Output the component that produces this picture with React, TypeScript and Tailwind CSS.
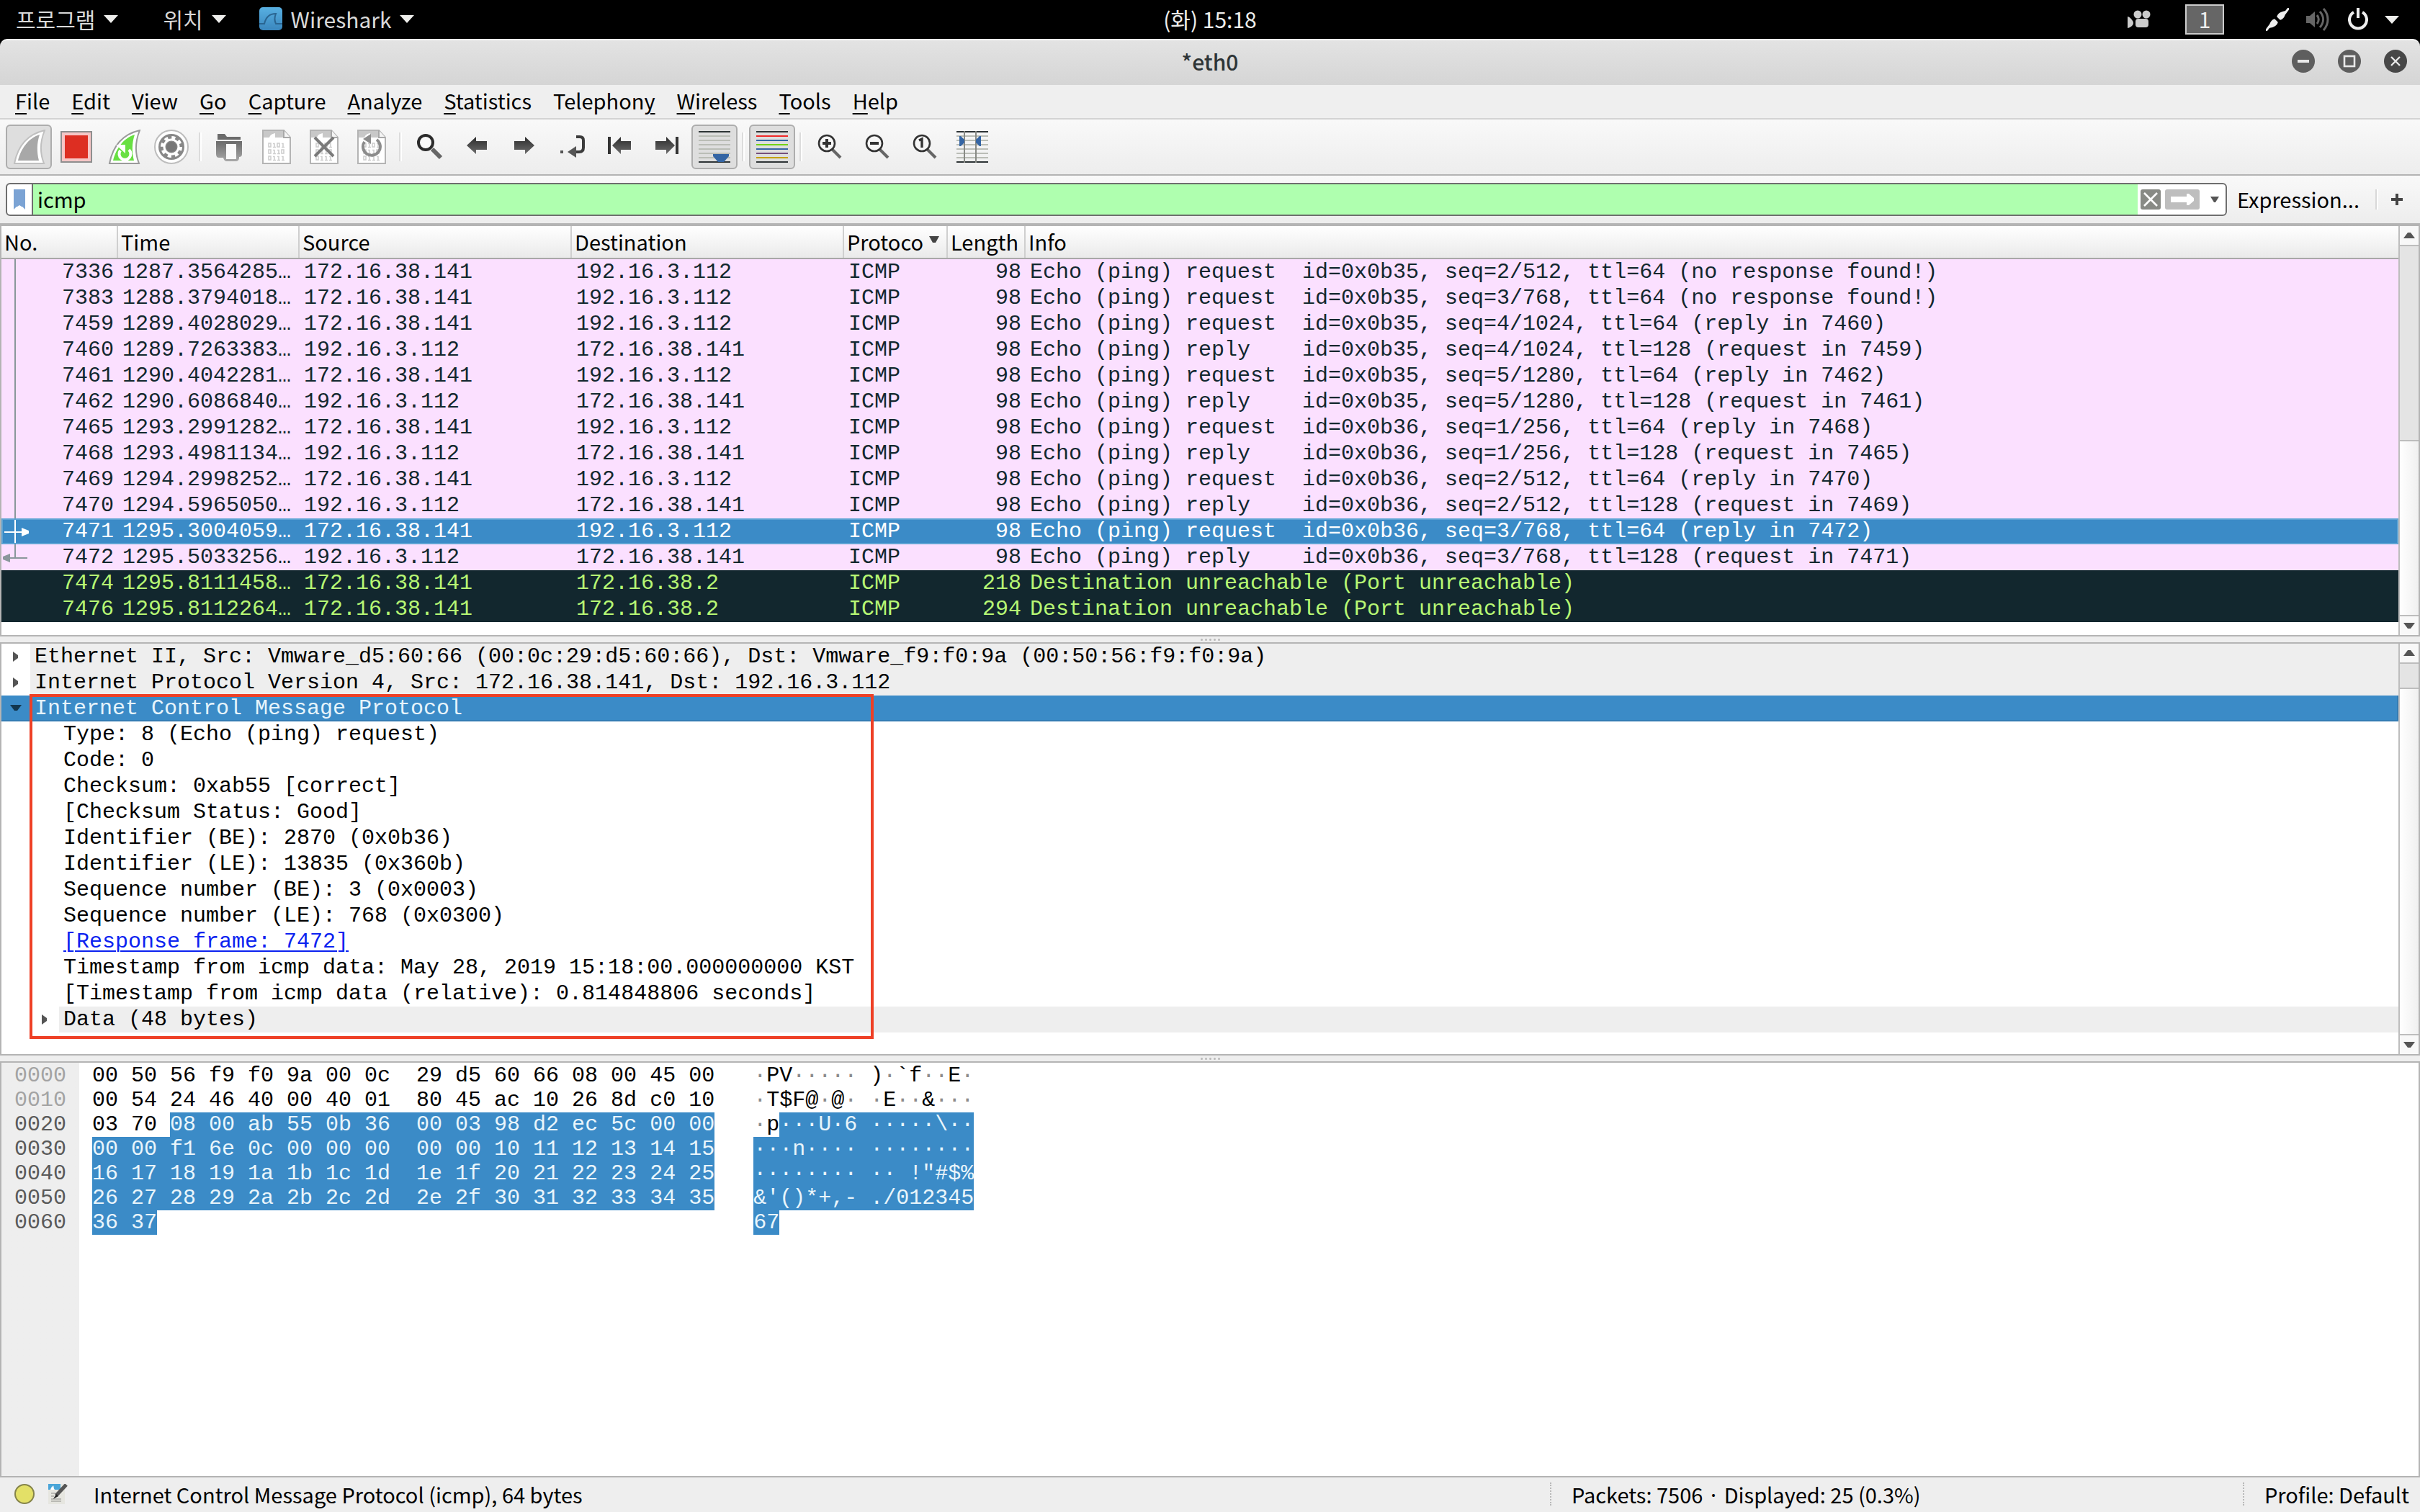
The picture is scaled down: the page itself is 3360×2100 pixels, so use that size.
import React, { Fragment, ReactNode } from "react";

/* ---------- data ---------- */

type Kind = "ping" | "selected" | "error";
type Mark = "line" | "request" | "reply" | "none";
type Packet = { no: string; time: string; src: string; dst: string; len: string; info: string; kind: Kind; mark: Mark };

const A = "172.16.38.141";
const B = "192.16.3.112";

const packets: Packet[] = [
  { no: "7336", time: "1287.3564285…", src: A, dst: B, len: "98", info: "Echo (ping) request  id=0x0b35, seq=2/512, ttl=64 (no response found!)", kind: "ping", mark: "line" },
  { no: "7383", time: "1288.3794018…", src: A, dst: B, len: "98", info: "Echo (ping) request  id=0x0b35, seq=3/768, ttl=64 (no response found!)", kind: "ping", mark: "line" },
  { no: "7459", time: "1289.4028029…", src: A, dst: B, len: "98", info: "Echo (ping) request  id=0x0b35, seq=4/1024, ttl=64 (reply in 7460)", kind: "ping", mark: "line" },
  { no: "7460", time: "1289.7263383…", src: B, dst: A, len: "98", info: "Echo (ping) reply    id=0x0b35, seq=4/1024, ttl=128 (request in 7459)", kind: "ping", mark: "line" },
  { no: "7461", time: "1290.4042281…", src: A, dst: B, len: "98", info: "Echo (ping) request  id=0x0b35, seq=5/1280, ttl=64 (reply in 7462)", kind: "ping", mark: "line" },
  { no: "7462", time: "1290.6086840…", src: B, dst: A, len: "98", info: "Echo (ping) reply    id=0x0b35, seq=5/1280, ttl=128 (request in 7461)", kind: "ping", mark: "line" },
  { no: "7465", time: "1293.2991282…", src: A, dst: B, len: "98", info: "Echo (ping) request  id=0x0b36, seq=1/256, ttl=64 (reply in 7468)", kind: "ping", mark: "line" },
  { no: "7468", time: "1293.4981134…", src: B, dst: A, len: "98", info: "Echo (ping) reply    id=0x0b36, seq=1/256, ttl=128 (request in 7465)", kind: "ping", mark: "line" },
  { no: "7469", time: "1294.2998252…", src: A, dst: B, len: "98", info: "Echo (ping) request  id=0x0b36, seq=2/512, ttl=64 (reply in 7470)", kind: "ping", mark: "line" },
  { no: "7470", time: "1294.5965050…", src: B, dst: A, len: "98", info: "Echo (ping) reply    id=0x0b36, seq=2/512, ttl=128 (request in 7469)", kind: "ping", mark: "line" },
  { no: "7471", time: "1295.3004059…", src: A, dst: B, len: "98", info: "Echo (ping) request  id=0x0b36, seq=3/768, ttl=64 (reply in 7472)", kind: "selected", mark: "request" },
  { no: "7472", time: "1295.5033256…", src: B, dst: A, len: "98", info: "Echo (ping) reply    id=0x0b36, seq=3/768, ttl=128 (request in 7471)", kind: "ping", mark: "reply" },
  { no: "7474", time: "1295.8111458…", src: A, dst: "172.16.38.2", len: "218", info: "Destination unreachable (Port unreachable)", kind: "error", mark: "none" },
  { no: "7476", time: "1295.8112264…", src: A, dst: "172.16.38.2", len: "294", info: "Destination unreachable (Port unreachable)", kind: "error", mark: "none" },
];

const icmpFields = [
  "Type: 8 (Echo (ping) request)",
  "Code: 0",
  "Checksum: 0xab55 [correct]",
  "[Checksum Status: Good]",
  "Identifier (BE): 2870 (0x0b36)",
  "Identifier (LE): 13835 (0x360b)",
  "Sequence number (BE): 3 (0x0003)",
  "Sequence number (LE): 768 (0x0300)",
  "[Response frame: 7472]",
  "Timestamp from icmp data: May 28, 2019 15:18:00.000000000 KST",
  "[Timestamp from icmp data (relative): 0.814848806 seconds]",
];

/* bytes before the highlighted range come first, highlighted ones second */
const dump = [
  { off: "0000", hex: ["00 50 56 f9 f0 9a 00 0c  29 d5 60 66 08 00 45 00", ""], gap: 3, asc: ["·PV····· )·`f··E·", ""] },
  { off: "0010", hex: ["00 54 24 46 40 00 40 01  80 45 ac 10 26 8d c0 10", ""], gap: 3, asc: ["·T$F@·@· ·E··&···", ""] },
  { off: "0020", hex: ["03 70 ", "08 00 ab 55 0b 36  00 03 98 d2 ec 5c 00 00"], gap: 3, asc: ["·p", "···U·6 ·····\\··"] },
  { off: "0030", hex: ["", "00 00 f1 6e 0c 00 00 00  00 00 10 11 12 13 14 15"], gap: 3, asc: ["", "···n···· ········"] },
  { off: "0040", hex: ["", "16 17 18 19 1a 1b 1c 1d  1e 1f 20 21 22 23 24 25"], gap: 3, asc: ["", "········ ·· !\"#$%"] },
  { off: "0050", hex: ["", "26 27 28 29 2a 2b 2c 2d  2e 2f 30 31 32 33 34 35"], gap: 3, asc: ["", "&'()*+,- ./012345"] },
  { off: "0060", hex: ["", "36 37"], gap: 46, asc: ["", "67"] },
];

/* ---------- top panel ---------- */

function Caret({ className = "text-[#eeeeec]" }: { className?: string }) {
  return (
    <svg viewBox="0 0 20 12" className={`h-3 w-5 ${className}`} aria-hidden="true">
      <path d="M0 1h20L10 12z" fill="currentColor" />
    </svg>
  );
}

function TopPanel() {
  return (
    <header className="grid h-[54px] shrink-0 grid-cols-[1fr_auto_1fr] items-center bg-black text-[30px] leading-[50px] text-[#d9d9d9]">
      <nav className="flex items-center pb-0.5 pl-[22px]">
        <button className="flex items-center gap-3">
          프로그램 <Caret />
        </button>
        <button className="ml-[62px] flex items-center gap-3">
          위치 <Caret />
        </button>
        <button className="ml-[46px] flex items-center gap-3">
          <svg viewBox="0 0 32 32" className="size-8" aria-hidden="true">
            <defs>
              <linearGradient id="ws" x1="0" y1="0" x2="0" y2="1">
                <stop offset="0" stopColor="#58b0e2" />
                <stop offset="1" stopColor="#3a86bd" />
              </linearGradient>
            </defs>
            <rect width="32" height="32" rx="5" fill="url(#ws)" />
            <path d="M0 23h7C9 14 14 9 23 9c-2 5-2 10 0 14h9" fill="none" stroke="#2a6591" strokeWidth="2" />
          </svg>
          Wireshark <Caret />
        </button>
      </nav>
      <time className="pb-0.5 text-[#eeeeec]">(화) 15:18</time>
      <div className="flex items-center justify-end pr-[29px]">
        <svg viewBox="0 0 32 26" className="mr-12 h-[26px] w-8" fill="#ccc" aria-hidden="true">
          <circle cx="14" cy="6" r="5.5" />
          <circle cx="26" cy="6" r="5.5" />
          <rect x="11" y="12" width="18" height="12" rx="4" />
          <path d="M0 9c2 0 8 5 8 9s-6 7-8 7z" />
        </svg>
        <button className="mr-[58px] flex h-[42px] w-[54px] items-center justify-center border-2 border-[#ccc] bg-[#666] pb-0.5 leading-none text-[#eee]">1</button>
        <svg viewBox="0 0 32 32" className="mr-6 size-8" aria-hidden="true">
          <path d="M0 32l6-8M26 8l6-8" stroke="#eee" strokeWidth="3" />
          <path d="M4 28c1-8 4-12 9-13l4 4c-1 5-5 8-13 9zM28 4c-8 1-12 4-13 9l4 4c5-1 8-5 9-13z" fill="#eee" />
          <path d="M12 14l6 6M14 12l6 6" stroke="#000" strokeWidth="1.5" />
        </svg>
        <svg viewBox="0 0 32 32" className="mr-[26px] size-8" fill="none" stroke="#666" strokeWidth="3" aria-hidden="true">
          <path d="M0 11h5l7-6v22l-7-6H0z" fill="#666" stroke="none" />
          <path d="M15 10c3 4 3 8 0 12M19 5c6 7 6 15 0 22M24 1c8 9 8 21 0 30" />
        </svg>
        <svg viewBox="0 0 28 32" className="mr-[23px] h-8 w-7" fill="none" stroke="#eee" strokeWidth="4" aria-hidden="true">
          <path d="M8 6a12 12 0 1 0 12 0M14 0v14" />
        </svg>
        <Caret />
      </div>
    </header>
  );
}

/* ---------- title and menu ---------- */

function TitleBar() {
  return (
    <div className="shrink-0 bg-black">
      <div className="grid h-16 grid-cols-[1fr_auto_1fr] items-center rounded-t-[10px] border-t-2 border-[#fafafa] bg-linear-to-b from-[#e3e3e3] to-[#d5d5d5] pr-[18px] pb-1">
        <span />
        <h1 className="pl-[18px] text-[30px] leading-none font-medium text-[#2e3436]">*eth0</h1>
        <div className="flex justify-end gap-8">
          <button aria-label="Minimize">
            <svg viewBox="0 0 32 32" className="size-8"><circle cx="16" cy="16" r="16" fill="#5e5e5e" /><path d="M8 16h16" stroke="#e8e8e8" strokeWidth="4" /></svg>
          </button>
          <button aria-label="Maximize">
            <svg viewBox="0 0 32 32" className="size-8"><circle cx="16" cy="16" r="16" fill="#5e5e5e" /><rect x="9" y="9" width="14" height="14" fill="none" stroke="#e8e8e8" strokeWidth="2.6" /></svg>
          </button>
          <button aria-label="Close">
            <svg viewBox="0 0 32 32" className="size-8"><circle cx="16" cy="16" r="16" fill="#474747" /><path d="M10 10l12 12M22 10L10 22" stroke="#e8e8e8" strokeWidth="2.4" /></svg>
          </button>
        </div>
      </div>
    </div>
  );
}

const menus: [string, string, string][] = [
  ["", "F", "ile"], ["", "E", "dit"], ["", "V", "iew"], ["", "G", "o"], ["", "C", "apture"], ["", "A", "nalyze"],
  ["", "S", "tatistics"], ["Telephon", "y", ""], ["", "W", "ireless"], ["", "T", "ools"], ["", "H", "elp"],
];

function MenuBar() {
  return (
    <nav className="flex h-12 shrink-0 items-start gap-[30px] border-b-2 border-[#d3d3d3] bg-[#efefef] pl-[21px]">
      {menus.map(([a, b, c]) => (
        <button key={a + b + c} className="leading-[42px]">
          {a}
          <span className="underline decoration-2 underline-offset-[5px]">{b}</span>
          {c}
        </button>
      ))}
    </nav>
  );
}

/* ---------- toolbar ---------- */

function Icon({ children }: { children: ReactNode }) {
  return (
    <svg viewBox="0 0 48 48" className="size-12" fill="none" aria-hidden="true">
      {children}
    </svg>
  );
}

const FIN = "M4 47C8 26 20 7 46 1C40 16 39 32 45 47z";
const FIN_IN = "M9 43C13 27 23 12 39 7C35 19 35 31 38 43z";

function Fin({ fill }: { fill: string }) {
  return (
    <>
      <path d={FIN} fill="#fff" stroke={fill === "#a8a8a8" ? "#c0c0c0" : "#9a9a9a"} strokeWidth="2" />
      <path d={FIN_IN} fill={fill} />
    </>
  );
}

function Doc({ children }: { children?: ReactNode }) {
  const bits = ["0101", "0110", "0111"];
  return (
    <Icon>
      <path d="M5 1h29l9 10v36H5z" fill="#fff" stroke="#b4b4b4" strokeWidth="2" />
      <path d="M6 2h27v9H22V5c-5 1-7 3-8 6H6z" fill="#c8c8c8" />
      <path d="M34 1v10h9" stroke="#a8a8a8" strokeWidth="2" fill="#f4f4f4" />
      {bits.map((row, r) =>
        row.split("").map((b, i) =>
          b === "0" ? (
            <rect key={`${r}${i}`} x={13 + i * 6} y={19 + r * 9} width="3" height="5" stroke="#cfcfcf" strokeWidth="1.6" />
          ) : (
            <path key={`${r}${i}`} d={`M${13 + i * 6} ${19.5 + r * 9}h2v5m-2 0h4`} stroke="#cfcfcf" strokeWidth="1.6" />
          ),
        ),
      )}
      {children}
    </Icon>
  );
}

function Lens({ children }: { children?: ReactNode }) {
  return (
    <Icon>
      <path d="M27 27l12 12" stroke="#666" strokeWidth="4" />
      <circle cx="20" cy="19" r="11" fill="#f6f6f6" stroke="#333" strokeWidth="2.6" />
      {children}
    </Icon>
  );
}

function Gradients() {
  return (
    <svg className="absolute size-0" aria-hidden="true">
      <defs>
        <linearGradient id="dark" x1="0" y1="0" x2="0" y2="1">
          <stop offset="0" stopColor="#2b2b2b" />
          <stop offset="1" stopColor="#6e6e6e" />
        </linearGradient>
        <linearGradient id="folder" x1="0" y1="0" x2="0" y2="1">
          <stop offset="0" stopColor="#6b6b6b" />
          <stop offset="1" stopColor="#a8a8a8" />
        </linearGradient>
      </defs>
    </svg>
  );
}

function Lines({ colors }: { colors: string[] }) {
  return (
    <>
      <path d="M2 3h44M2 45h44" stroke="#2e3436" strokeWidth="2" />
      {colors.map((c, i) => (
        <path key={i} d={`M2 ${9 + i * 6}h44`} stroke={c} strokeWidth="2" />
      ))}
    </>
  );
}

const pale = Array(6).fill("#babdb6");

const tools: ({ label: string; pressed?: boolean; icon: ReactNode } | null)[] = [
  { label: "Start capture", pressed: true, icon: <Icon><Fin fill="#a8a8a8" /></Icon> },
  { label: "Stop capture", icon: <Icon><rect x="3" y="3" width="42" height="42" fill="#f6c6c6" stroke="#8f8f8f" strokeWidth="2" /><rect x="8" y="8" width="32" height="32" fill="#dd2e22" /></Icon> },
  { label: "Restart capture", icon: <Icon><Fin fill="#68e042" /><path d="M19 29a8 8 0 1 0 12-1" stroke="#fff" strokeWidth="4" /><path d="M13 21h13v12z" fill="#fff" /></Icon> },
  {
    label: "Capture options",
    icon: (
      <Icon>
        <circle cx="24" cy="24" r="23" fill="#fff" stroke="#bdbdbd" strokeWidth="2" />
        <circle cx="24" cy="24" r="18" fill="#888" />
        <circle cx="24" cy="24" r="10" stroke="#fff" strokeWidth="3" />
        <circle cx="24" cy="24" r="13" stroke="#fff" strokeWidth="4" strokeDasharray="5.1 5.1" />
        <circle cx="24" cy="24" r="7" fill="#777" />
      </Icon>
    ),
  },
  null,
  {
    label: "Open file",
    icon: (
      <Icon>
        <path d="M8 6h10l3 4h19v4H8z" fill="#6b6b6b" />
        <path d="M6 16h36v18q0 4-4 4v1q0 5-5 5H21q-4 0-5-5h-6q-4 0-4-5z" fill="url(#folder)" />
        <rect x="20" y="20" width="14" height="21" fill="#fafafa" />
      </Icon>
    ),
  },
  { label: "Save file", icon: <Doc /> },
  { label: "Close file", icon: <Doc><path d="M11 11l26 26M37 11L11 37" stroke="#7a7a7a" strokeWidth="4" /></Doc> },
  { label: "Reload file", icon: <Doc><path d="M14 17a12 12 0 1 0 17-3" stroke="#8c8c8c" strokeWidth="4" /><path d="M23 6v14l-11-7z" fill="#8c8c8c" /></Doc> },
  null,
  { label: "Find packet", icon: <Icon><path d="M28 27l12 12" stroke="#666" strokeWidth="6" /><circle cx="19" cy="18" r="10" fill="#fafafa" stroke="#2b2b2b" strokeWidth="4" /></Icon> },
  { label: "Previous packet", icon: <Icon><path d="M10 22L23 10v6h15v12H23v6z" fill="url(#dark)" /></Icon> },
  { label: "Next packet", icon: <Icon><path d="M38 22L25 10v6H10v12h15v6z" fill="url(#dark)" /></Icon> },
  { label: "Go to packet", icon: <Icon><path d="M30 10h5q5 0 5 5v10q0 6-6 6h-6" stroke="#3c3c3c" strokeWidth="4" /><path d="M18 31l12-8v16z" fill="#555" /><rect x="8" y="29" width="4" height="4" fill="#555" /></Icon> },
  { label: "First packet", icon: <Icon><path d="M10 10v24" stroke="#333" strokeWidth="4" /><path d="M14 22L26 10v6h14v12H26v6z" fill="url(#dark)" /></Icon> },
  { label: "Last packet", icon: <Icon><path d="M38 10v24" stroke="#333" strokeWidth="4" /><path d="M35 22L23 10v6H8v12h15v6z" fill="url(#dark)" /></Icon> },
  { label: "Auto scroll", pressed: true, icon: <Icon><Lines colors={pale} /><path d="M22 34h22v3l-7 8h-8l-7-8z" fill="#3465a4" /></Icon> },
  null,
  { label: "Colorize", pressed: true, icon: <Icon><Lines colors={["#ef2929", "#3465a4", "#73d216", "#3465a4", "#75507b", "#c4a000"]} /></Icon> },
  null,
  { label: "Zoom in", icon: <Lens><path d="M14 19h12M20 13v12" stroke="#333" strokeWidth="4" /></Lens> },
  { label: "Zoom out", icon: <Lens><path d="M14 19h12" stroke="#333" strokeWidth="4" /></Lens> },
  { label: "Normal size", icon: <Lens><path d="M16 15l4-2v12" stroke="#333" strokeWidth="3.4" /></Lens> },
  { label: "Resize columns", icon: <Icon><Lines colors={pale} /><path d="M13 2v44M29 2v44" stroke="#888a85" strokeWidth="2" /><path d="M6 9h2l5 5v4l-5 5H6zM36 9h-2l-5 5v4l5 5h2z" fill="#3465a4" /></Icon> },
];

function ToolBar() {
  return (
    <div role="toolbar" className="flex h-[78px] shrink-0 items-center gap-[2px] border-b-2 border-[#b4b4b4] bg-linear-to-b from-[#f9f9f9] to-[#ededed] pl-2">
      <Gradients />
      {tools.map((t, i) =>
        t ? (
          <button
            key={i}
            aria-label={t.label}
            className={
              t.pressed
                ? "flex h-[62px] w-16 items-center justify-center rounded-md border-2 border-[#adadad] bg-[#dedede]"
                : "flex h-[62px] w-16 items-center justify-center"
            }
          >
            {t.icon}
          </button>
        ) : (
          <span key={i} className="flex h-10 w-3 justify-center">
            <span className="w-1 border-r-2 border-l-2 border-r-white border-l-[#dcdcdc]" />
          </span>
        ),
      )}
    </div>
  );
}

/* ---------- filter bar ---------- */

function FilterBar() {
  return (
    <div className="flex h-[66px] shrink-0 items-center bg-linear-to-b from-[#f9f9f9] to-[#ededed] pr-6 pl-2">
      <form className="flex h-[46px] min-w-0 flex-1 overflow-hidden rounded-md border-2 border-[#6e6e6e] bg-white">
        <button type="button" aria-label="Bookmark filter" className="flex w-9 shrink-0 items-center justify-center border-r-2 border-[#6e6e6e]">
          <svg viewBox="0 0 16 28" className="h-7 w-4"><path d="M0 0h16v28l-4-4h-1l-3-2-3 2H4l-4 4z" fill="#7ba3d4" /></svg>
        </button>
        <input aria-label="Display filter" defaultValue="icmp" className="min-w-0 flex-1 bg-[#afffaf] px-1.5 pb-0.5 leading-10 outline-none" />
        <button type="button" aria-label="Clear filter" className="flex w-9 shrink-0 items-center justify-center">
          <svg viewBox="0 0 28 28" className="size-7"><rect width="28" height="28" rx="3" fill="#888a85" /><path d="M5 5l18 18M23 5L5 23" stroke="#fff" strokeWidth="2.6" /></svg>
        </button>
        <button type="button" aria-label="Apply filter" className="flex w-[52px] shrink-0 items-center justify-center">
          <svg viewBox="0 0 48 28" className="h-7 w-12"><rect width="48" height="28" rx="3" fill="#bebebe" /><path d="M8 10h22V6h3l7 6v4l-7 6h-3v-4H8z" fill="#fff" /></svg>
        </button>
        <button type="button" aria-label="Filter history" className="flex w-[34px] shrink-0 items-center justify-center pl-1">
          <svg viewBox="0 0 12 8" className="h-2 w-3"><path d="M0 0h12L7 8H5z" fill="#555" /></svg>
        </button>
      </form>
      <button className="ml-[14px]">Expression...</button>
      <span className="mr-[18px] ml-[22px] h-7 w-1 border-r-2 border-l-2 border-r-white border-l-[#d8d8d8]" />
      <button aria-label="Add filter button">
        <svg viewBox="0 0 16 16" className="size-4"><path d="M8 0v16M0 8h16" stroke="#444" strokeWidth="4" /></svg>
      </button>
    </div>
  );
}

/* ---------- scroll bar ---------- */

function ScrollBar({ pos }: { pos: "low" | "high" }) {
  return (
    <div className="flex w-7 shrink-0 flex-col border-l-2 border-[#bdbdbd] bg-[#e4e4e4]" aria-hidden="true">
      <div className="flex h-7 shrink-0 items-center justify-center border-b-2 border-[#bdbdbd] bg-[#f8f8f8]">
        <svg viewBox="0 0 16 8" className="h-2 w-4"><path d="M0 8h16L10 0H6z" fill="#555" /></svg>
      </div>
      <div className={pos === "low" ? "grow-270" : "grow-33"} />
      <div className={`border-y-2 border-[#bdbdbd] bg-linear-to-r from-white to-[#f0f0f0] ${pos === "low" ? "grow-242" : "grow-483"}`} />
      <div className="flex h-[26px] shrink-0 items-center justify-center bg-[#f8f8f8]">
        <svg viewBox="0 0 16 8" className="h-2 w-4"><path d="M0 0h16l-6 8H6z" fill="#555" /></svg>
      </div>
    </div>
  );
}

function Splitter() {
  return (
    <div className="flex h-2 shrink-0 items-center justify-center gap-[3px]" role="separator">
      {[0, 1, 2, 3, 4].map((i) => (
        <span key={i} className="size-[3px] rounded-full bg-[#b8b8b8]" />
      ))}
    </div>
  );
}

/* ---------- packet list ---------- */

function RowMark({ mark }: { mark: Mark }) {
  return (
    <svg viewBox="0 0 40 36" className="h-9 w-10" aria-hidden="true">
      {mark === "line" && <path d="M19 0v36" stroke="#8a979b" strokeWidth="2" />}
      {mark === "request" && (
        <>
          <path d="M19 0v36M4 19h26" stroke="#fff" strokeWidth="2" />
          <path d="M28 13l10 4v4l-10 4z" fill="#fff" />
        </>
      )}
      {mark === "reply" && (
        <>
          <path d="M19 0v19M10 19h26" stroke="#8a979b" strokeWidth="2" fill="none" />
          <path d="M12 13L2 17v4l10 4z" fill="#8a979b" />
        </>
      )}
    </svg>
  );
}

const rowStyle: Record<Kind, string> = {
  ping: "bg-[#fbe0ff] text-[#12272e]",
  selected: "bg-[#3b8bc7] text-white outline-2 -outline-offset-2 outline-[#5ea4d4]",
  error: "bg-[#12272e] text-[#b7f774]",
};

const head = "h-11 border-r-2 border-[#cfcfcf] p-0 pb-0.5 pl-1 text-left font-normal leading-none whitespace-nowrap overflow-hidden";
const cell = "overflow-hidden p-0 pl-1.5 whitespace-pre";

function PacketList() {
  return (
    <section className="flex shrink-0 border-x-2 border-t-4 border-b-2 border-[#b4b4b4] bg-white">
      <div className="min-w-0 flex-1 pb-[18px]">
        <table className="w-full table-fixed border-separate border-spacing-0">
          <colgroup>
            <col className="w-[162px]" />
            <col className="w-[252px]" />
            <col className="w-[378px]" />
            <col className="w-[378px]" />
            <col className="w-36" />
            <col className="w-[108px]" />
            <col />
          </colgroup>
          <thead className="bg-linear-to-b from-white to-[#e9e9e9]">
            <tr>
              <th className={head}>No.</th>
              <th className={head}>Time</th>
              <th className={head}>Source</th>
              <th className={head}>Destination</th>
              <th className={head}>
                <span className="flex items-center gap-2">
                  Protoco
                  <svg viewBox="0 0 14 10" className="mb-1 h-2.5 w-3.5"><path d="M0 0h14L9 9H5z" fill="#444" /></svg>
                </span>
              </th>
              <th className={head}>Length</th>
              <th className="h-11 p-0 pb-0.5 pl-1 text-left leading-none font-normal">Info</th>
            </tr>
            <tr><td colSpan={7} className="h-[2px] bg-[#a8a8a8] p-0" /></tr>
          </thead>
          <tbody className="font-['Liberation_Mono',monospace] text-[30px] leading-9">
            {packets.map((p) => (
              <tr key={p.no} className={`h-9 ${rowStyle[p.kind]}`}>
                <td className="p-0">
                  <span className="flex h-9 items-center justify-between pr-1.5">
                    <RowMark mark={p.mark} />
                    {p.no}
                  </span>
                </td>
                <td className={cell}>{p.time}</td>
                <td className={cell}>{p.src}</td>
                <td className={cell}>{p.dst}</td>
                <td className={cell}>ICMP</td>
                <td className="p-0 pr-1.5 text-right">{p.len}</td>
                <td className={cell}>{p.info}</td>
              </tr>
            ))}
          </tbody>
        </table>
      </div>
      <ScrollBar pos="low" />
    </section>
  );
}

/* ---------- details tree ---------- */

function Twisty({ open }: { open?: boolean }) {
  return (
    <svg viewBox="0 0 16 16" className="size-4" aria-hidden="true">
      {open ? <path d="M0 4h16l-6 8H6z" fill="#12374f" /> : <path d="M4 1l7 5v4l-7 5z" fill="#555" />}
    </svg>
  );
}

function Details() {
  return (
    <section className="relative flex shrink-0 border-2 border-[#b4b4b4] bg-white">
      <ul role="tree" className="min-w-0 flex-1 pb-[30px] font-['Liberation_Mono',monospace] text-[30px] leading-9 whitespace-pre">
        {["Ethernet II, Src: Vmware_d5:60:66 (00:0c:29:d5:60:66), Dst: Vmware_f9:f0:9a (00:50:56:f9:f0:9a)", "Internet Protocol Version 4, Src: 172.16.38.141, Dst: 192.16.3.112"].map((t) => (
          <li key={t} role="treeitem" className="flex h-9">
            <span className="flex w-10 items-center justify-center"><Twisty /></span>
            <span className="flex-1 bg-[#eeeeee] pl-1.5">{t}</span>
          </li>
        ))}
        <li role="treeitem" aria-expanded="true">
          <div className="flex h-9 border-r-2 border-b-2 border-[#347cb3] bg-[#3b8bc7] text-[#e6f4fb]">
            <span className="flex w-10 items-center justify-center"><Twisty open /></span>
            <span className="flex-1 pl-1.5">Internet Control Message Protocol</span>
          </div>
          <ul role="group">
            {icmpFields.map((t) => (
              <li key={t} role="treeitem" className="h-9 pl-[86px]">
                {t.startsWith("[Response") ? <a href="#7472" className="text-[#0b22f0] underline decoration-2 underline-offset-4">{t}</a> : t}
              </li>
            ))}
            <li role="treeitem" className="flex h-9 pl-10">
              <span className="flex w-10 items-center justify-center"><Twisty /></span>
              <span className="flex-1 bg-[#eeeeee] pl-1.5">Data (48 bytes)</span>
            </li>
          </ul>
        </li>
      </ul>
      <ScrollBar pos="high" />
      <div className="pointer-events-none absolute top-[70px] left-[39px] h-[479px] w-[1172px] border-4 border-[#ee4026]" />
    </section>
  );
}

/* ---------- byte dump ---------- */

function Ascii({ text }: { text: string }) {
  return (
    <>
      {text.split(/(·+)/).map((s, i) => (
        <Fragment key={i}>{s.startsWith("·") ? <span className="text-[#8c8c8c]">{s}</span> : s}</Fragment>
      ))}
    </>
  );
}

function Bytes() {
  return (
    <section className="min-h-0 flex-1 overflow-hidden border-2 border-[#b4b4b4] bg-linear-to-r from-[#eeeeee] from-[108px] to-white to-[108px]">
      <div className="pt-px font-['Liberation_Mono',monospace] text-[30px] leading-[34px] whitespace-pre">
        {dump.map((r, i) => (
          <div key={r.off} className="flex h-[34px]">
            <span className={`w-[126px] pl-[18px] ${i < 2 ? "text-[#a3a3a3]" : "text-[#5a5a5a]"}`}>{r.off}</span>
            <span>{r.hex[0]}</span>
            <span className="bg-[#3b8bc7] text-[#e9f5fb]">{r.hex[1]}</span>
            <span>{" ".repeat(r.gap)}</span>
            <span><Ascii text={r.asc[0]} /></span>
            <span className="bg-[#3b8bc7] text-[#e9f5fb]">{r.asc[1]}</span>
          </div>
        ))}
      </div>
    </section>
  );
}

/* ---------- status bar ---------- */

function StatusBar() {
  return (
    <footer className="grid h-12 shrink-0 grid-cols-[2152fr_962fr_246fr] items-center pb-0.5 leading-none">
      <div className="flex items-center pl-5">
        <svg viewBox="0 0 28 28" className="size-7" aria-hidden="true"><circle cx="14" cy="14" r="13" fill="#e3e067" stroke="#85844a" strokeWidth="2" /></svg>
        <svg viewBox="0 0 28 28" className="mr-9 ml-[18px] size-7" aria-hidden="true">
          <rect x="1" y="0" width="23" height="28" fill="#e6e6e0" />
          <rect x="1" y="0" width="17" height="8" fill="#4aa5d8" />
          <path d="M4 8c1-4 4-5 4-6 1 2 0 4 2 6z" fill="#fff" />
          <path d="M5 13h6M5 17h4M5 21h14M5 24h14" stroke="#b9b9b4" strokeWidth="2" />
          <path d="M26 1L12 16" stroke="#555" strokeWidth="5" />
          <path d="M12 14l-4 7 7-4z" fill="#222" />
        </svg>
        Internet Control Message Protocol (icmp), 64 bytes
      </div>
      <div className="flex h-8 items-center border-l-2 border-dotted border-[#b8b8b8] pl-7">Packets: 7506 · Displayed: 25 (0.3%)</div>
      <div className="flex h-8 items-center border-l-2 border-dotted border-[#b8b8b8] pl-7 whitespace-nowrap">Profile: Default</div>
    </footer>
  );
}

export default function App() {
  return (
    <div className="flex h-screen flex-col overflow-hidden bg-[#eeeeee] font-['Noto_Sans_CJK_KR',sans-serif] text-[29px] text-black">
      <TopPanel />
      <TitleBar />
      <MenuBar />
      <ToolBar />
      <FilterBar />
      <PacketList />
      <Splitter />
      <Details />
      <Splitter />
      <Bytes />
      <StatusBar />
    </div>
  );
}
